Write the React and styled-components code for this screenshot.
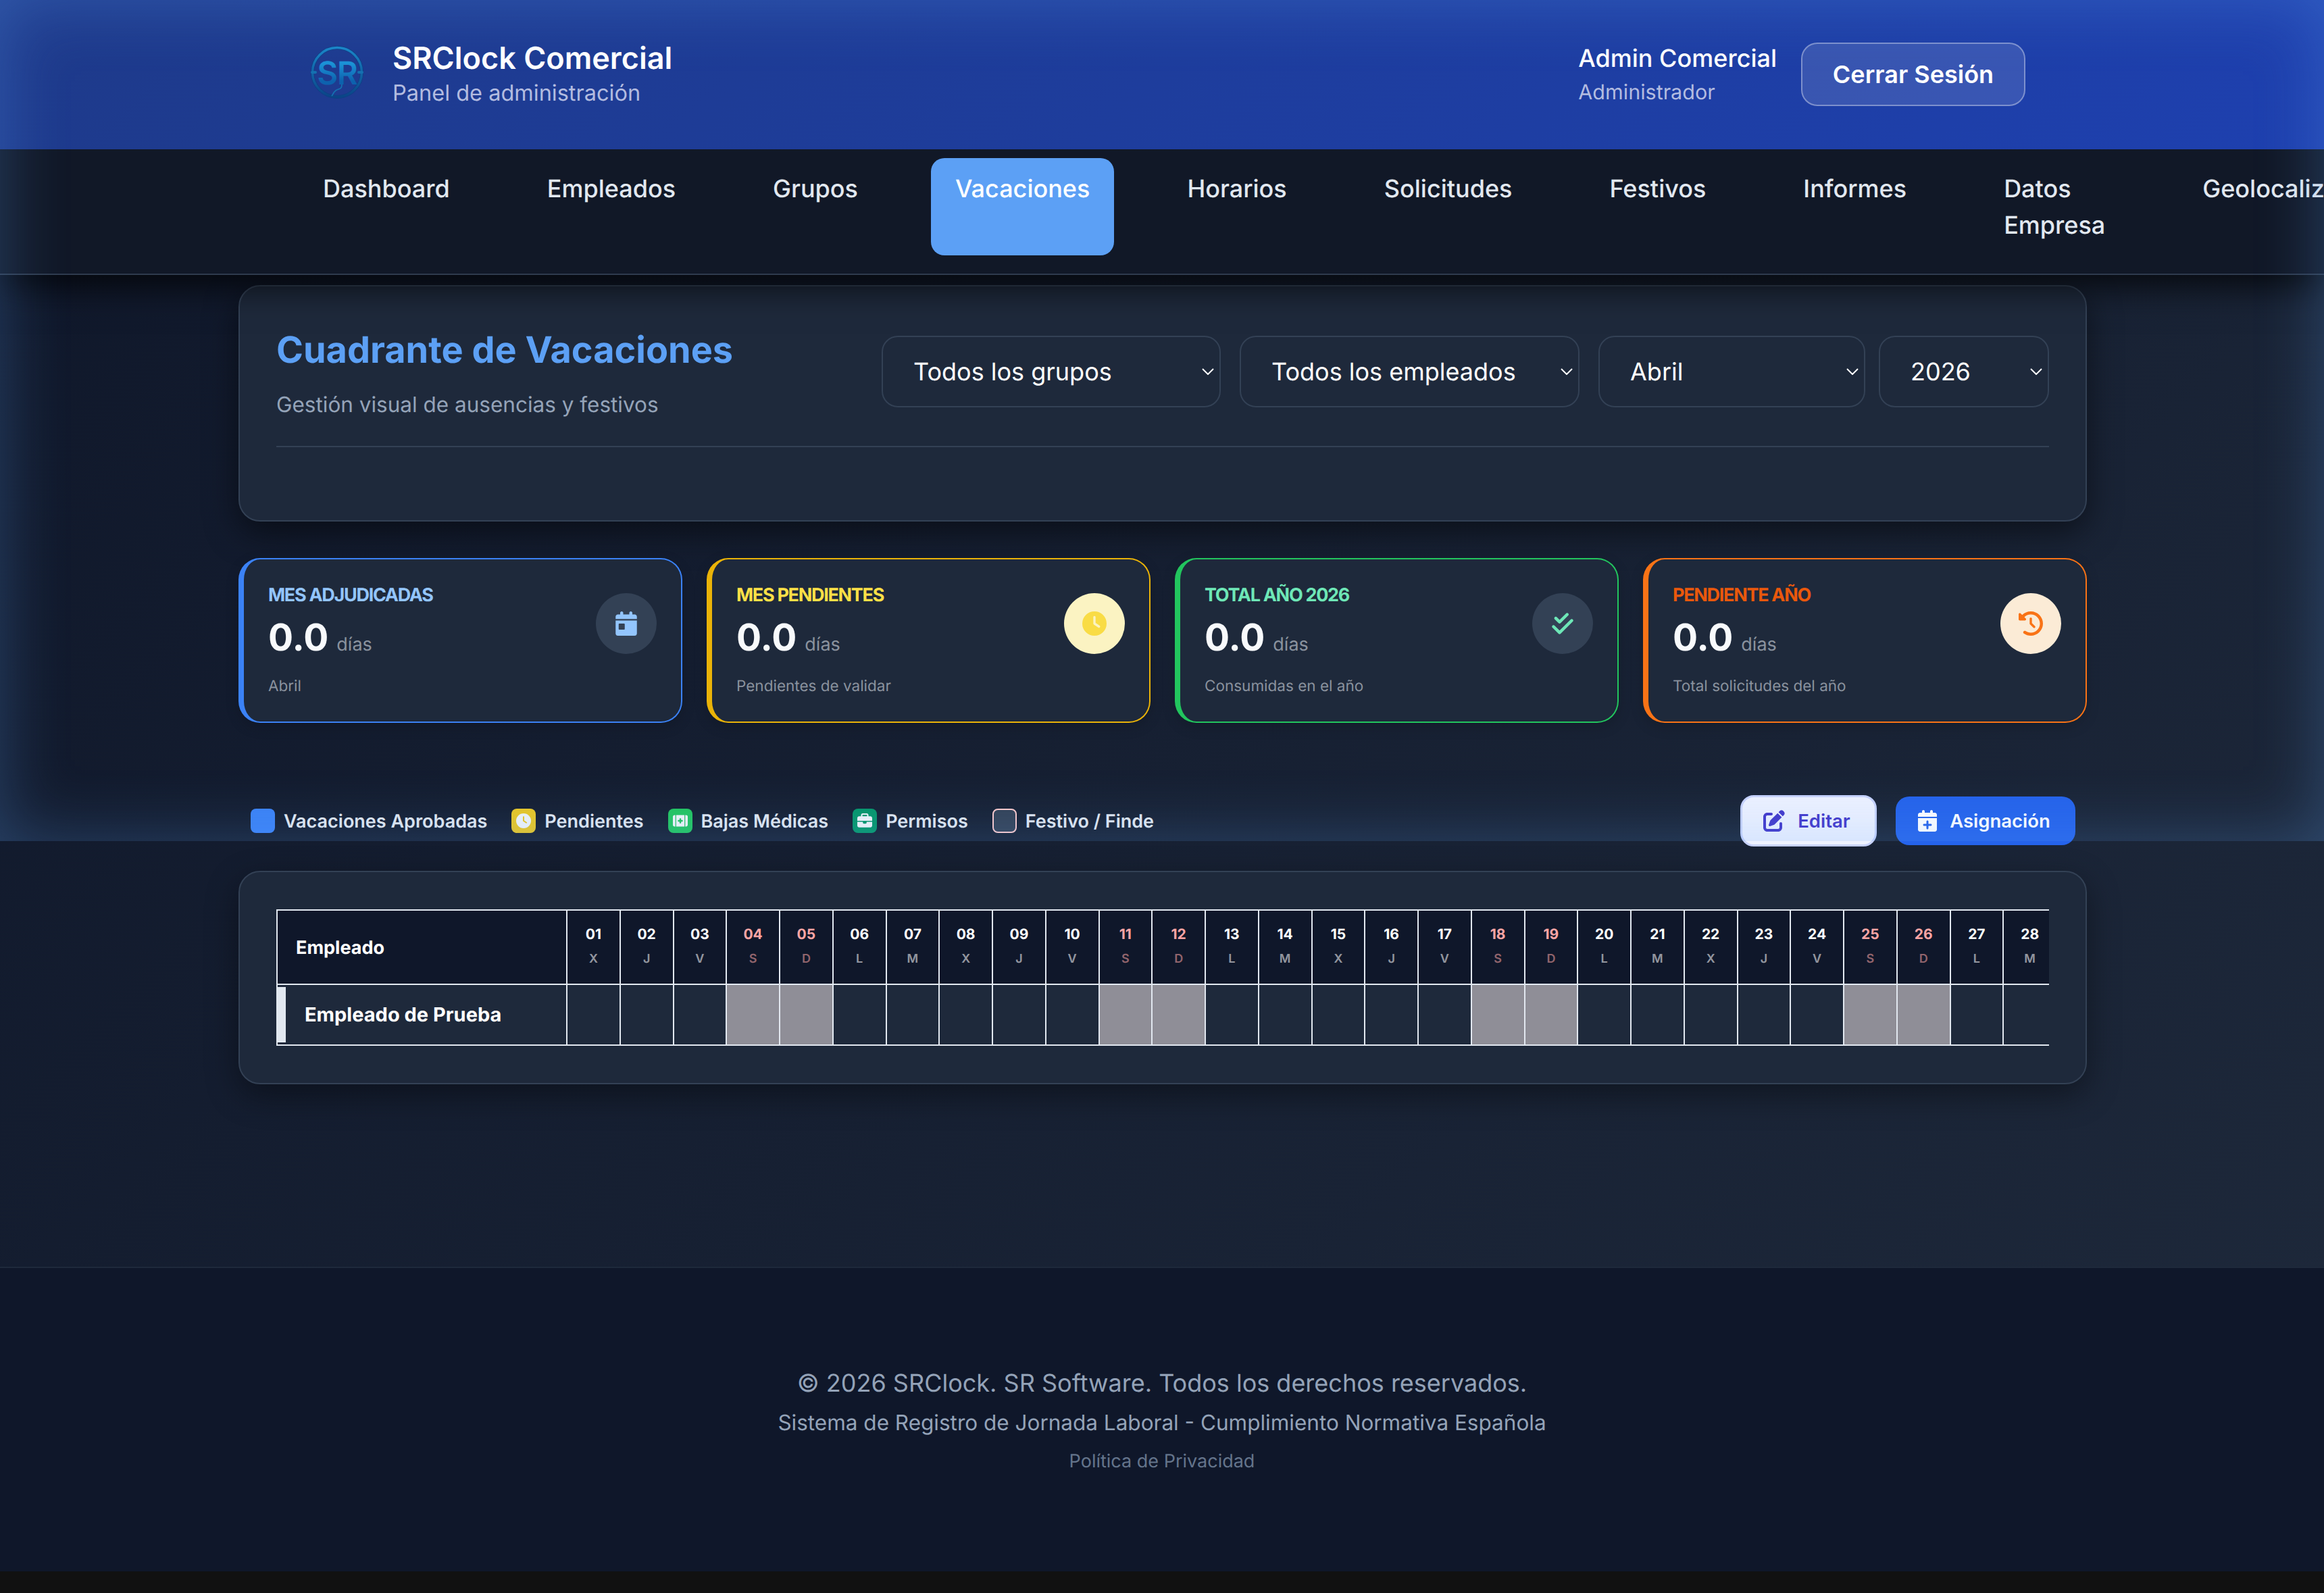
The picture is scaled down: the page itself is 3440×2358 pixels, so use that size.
import React from "react";
import styled, { createGlobalStyle } from "styled-components";
import {
  FaCalendarDay,
  FaClock,
  FaCheckDouble,
  FaClockRotateLeft,
  FaKitMedical,
  FaBriefcase,
  FaPenToSquare,
  FaCalendarPlus,
} from "react-icons/fa6";

const Global = createGlobalStyle`
  html, body { margin: 0; padding: 0; background: #111111; }
  body {
    font-family: Inter, "Noto Sans", "Liberation Sans", sans-serif;
    text-rendering: geometricPrecision;
    -webkit-font-smoothing: antialiased;
    overflow-x: hidden;
  }
  * { box-sizing: border-box; }
`;

const Page = styled.div`
  position: relative;
  width: 3440px;
  height: 2358px;
  overflow: hidden;
  background: #111111;
`;
const Shell = styled.div`
  height: 2326px;
  display: flex;
  flex-direction: column;
  background: linear-gradient(135deg, #0f172a 0%, #1e293b 100%);
`;
const EdgeGlow = styled.div`
  position: absolute;
  top: 0;
  left: 0;
  width: 100%;
  height: 1245px;
  pointer-events: none;
  z-index: 5;
  box-shadow: inset 0 0 100px rgba(96, 165, 250, 0.3);
`;

const Header = styled.header`
  height: 221px;
  flex-shrink: 0;
  background: linear-gradient(135deg, #1e3a8a 0%, #1e40af 100%);
  padding: 0 442px 2px 444px;
  display: flex;
  align-items: center;
  justify-content: space-between;
`;
const Brand = styled.div`
  display: flex;
  align-items: center;
  gap: 25px;
`;
const LogoBox = styled.svg`
  width: 112px;
  height: 112px;
  display: block;
`;
const BrandTitle = styled.div`
  font-size: 45px;
  font-weight: 600;
  line-height: 56px;
  color: #ffffff;
`;
const BrandSub = styled.div`
  font-size: 32.5px;
  line-height: 48px;
  color: #b3bce0;
`;
const UserArea = styled.div`
  display: flex;
  align-items: center;
  gap: 36px;
`;
const UserName = styled.div`
  font-size: 36px;
  font-weight: 500;
  line-height: 54px;
  color: #ffffff;
`;
const UserRole = styled.div`
  font-size: 30.5px;
  line-height: 48px;
  color: #b3bce0;
`;
const LogoutButton = styled.button`
  width: 332px;
  height: 94px;
  border: 2px solid rgba(255, 255, 255, 0.35);
  border-radius: 24px;
  background: rgba(255, 255, 255, 0.12);
  color: #ffffff;
  font: 600 36px Inter, sans-serif;
`;

const Nav = styled.nav`
  position: relative;
  z-index: 2;
  height: 186px;
  flex-shrink: 0;
  display: flex;
  align-items: flex-start;
  gap: 72px;
  padding: 13px 0 0 442px;
  background: #111827;
  border-bottom: 2px solid #2f3b4e;
  box-shadow: 0 16px 48px rgba(0, 0, 0, 0.75);
  clip-path: inset(0 0 -100px 0);
`;
const Tab = styled.a`
  flex-shrink: 0;
  height: 144px;
  padding: 18px 36px;
  border-radius: 20px;
  font-size: 36px;
  font-weight: 500;
  line-height: 54px;
  color: ${(p) => (p.$active ? "#ffffff" : "#e2e8f0")};
  background: ${(p) => (p.$active ? "#5ca0f5" : "transparent")};
  width: ${(p) => (p.$wrap ? "min-content" : "auto")};
`;

const Main = styled.main`
  flex: 1;
  padding: 15px 351px 0 353px;
`;
const FilterCard = styled.section`
  height: 350px;
  padding: 53px 54px;
  background: #1e293b;
  border: 2px solid #334155;
  border-radius: 32px;
  box-shadow: 0 16px 48px rgba(0, 0, 0, 0.5);
`;
const FilterHead = styled.div`
  display: flex;
  align-items: center;
  justify-content: space-between;
  padding-bottom: 37px;
  border-bottom: 2px solid #334155;
`;
const PageTitle = styled.h1`
  margin: 0;
  font-size: 54px;
  font-weight: 700;
  line-height: 84px;
  color: #5ca0f5;
`;
const PageSub = styled.p`
  margin: 14px 0 0;
  font-size: 31.5px;
  line-height: 48px;
  color: #94a3b8;
`;
const Filters = styled.div`
  display: flex;
  align-items: center;
  gap: 28px;
`;
const PeriodPair = styled.div`
  display: flex;
  gap: 20px;
`;
const SelectBox = styled.div`
  width: ${(p) => p.$w}px;
  height: 106px;
  padding: 0 8px 0 45px;
  display: flex;
  align-items: center;
  justify-content: space-between;
  border: 2px solid #334155;
  border-radius: 24px;
  background: #1e293b;
  color: #ffffff;
  font-size: 36px;
`;

const StatGrid = styled.div`
  display: grid;
  grid-template-columns: repeat(4, 1fr);
  gap: 36px;
  margin-top: 54px;
`;
const StatCard = styled.article`
  height: 244px;
  padding: 32px 36px 0 36px;
  background: #1e293b;
  border: 2px solid ${(p) => p.$color};
  border-left-width: 8px;
  border-radius: 32px;
  box-shadow: 0 6px 20px rgba(0, 0, 0, 0.15);
`;
const StatTop = styled.div`
  display: flex;
  align-items: center;
  justify-content: space-between;
`;
const StatLabel = styled.div`
  font-size: 27px;
  font-weight: 700;
  line-height: 42px;
  letter-spacing: -1.3px;
  text-transform: uppercase;
  color: ${(p) => p.$color};
`;
const StatValue = styled.div`
  font-size: 55px;
  font-weight: 700;
  line-height: 84px;
  color: #f8fafc;
`;
const StatUnit = styled.span`
  margin-left: 12px;
  font-size: 27px;
  font-weight: 400;
  line-height: 27px;
  color: #8a929e;
`;
const StatIcon = styled.div`
  width: 90px;
  height: 90px;
  border-radius: 50%;
  display: flex;
  align-items: center;
  justify-content: center;
  font-size: 36px;
  background: ${(p) => p.$bg};
  color: ${(p) => p.$color};
`;
const StatNote = styled.div`
  margin-top: 12px;
  font-size: 22.5px;
  line-height: 36px;
  color: #8a929e;
`;

const LegendRow = styled.div`
  height: 76px;
  margin: 107px 0 36px;
  padding: 0 17px 0 18px;
  display: flex;
  align-items: center;
  justify-content: space-between;
`;
const Legend = styled.div`
  display: flex;
  align-items: center;
  gap: 36px;
`;
const LegendItem = styled.div`
  display: flex;
  align-items: center;
  gap: 13px;
  font-size: 27px;
  font-weight: 600;
  color: #e2e8f0;
`;
const Swatch = styled.span`
  width: 36px;
  height: 36px;
  border-radius: 8px;
  display: flex;
  align-items: center;
  justify-content: center;
  font-size: 22px;
  color: #f1f5f9;
  background: ${(p) => p.$bg};
  border: ${(p) => (p.$border ? `2px solid ${p.$border}` : "none")};
`;
const Actions = styled.div`
  display: flex;
  align-items: center;
  gap: 28px;
`;
const EditButton = styled.button`
  width: 202px;
  height: 76px;
  padding: 0 5px 0 0;
  display: flex;
  align-items: center;
  justify-content: center;
  gap: 19px;
  border: 3px solid #c7d2fe;
  border-radius: 20px;
  background: #eef2ff;
  color: #4338ca;
  font: 600 27.5px Inter, sans-serif;
  svg { font-size: 32px; }
`;
const AssignButton = styled.button`
  width: 266px;
  height: 72px;
  padding: 0 6px 0 0;
  display: flex;
  align-items: center;
  justify-content: center;
  gap: 17px;
  border: none;
  border-radius: 20px;
  background: #2563eb;
  color: #ffffff;
  font: 600 27.5px Inter, sans-serif;
  svg { font-size: 32px; }
`;

const TableCard = styled.section`
  padding: 55px 54px 55px;
  background: #1e293b;
  border: 2px solid #334155;
  border-radius: 32px;
  box-shadow: 0 16px 48px rgba(0, 0, 0, 0.4);
`;
const TableScroll = styled.div`
  overflow: hidden;
`;
const Cuadrante = styled.table`
  width: 2636px;
  table-layout: fixed;
  border-collapse: collapse;
  color: #ffffff;
  th, td {
    padding: 0;
    border: 2px solid #e2e8f0;
  }
`;
const EmployeeHead = styled.th`
  width: 429px;
  height: 110px;
  padding-left: 27px !important;
  background: #0f172a;
  text-align: left;
  font-size: 27px;
  font-weight: 700;
`;
const DayHead = styled.th`
  height: 110px;
  background: #0f172a;
  text-align: center;
  color: ${(p) => (p.$weekend ? "#fca5a5" : "#ffffff")};
`;
const DayNum = styled.div`
  font-size: 21px;
  font-weight: 700;
  line-height: 30px;
`;
const DayLetter = styled.div`
  margin-top: 6px;
  font-size: 18px;
  font-weight: 600;
  line-height: 30px;
  opacity: 0.55;
`;
const NameCell = styled.td`
  height: 90px;
  background: #1e293b;
`;
const NameInner = styled.div`
  height: 82px;
  display: flex;
  align-items: center;
  padding: 0 0 2px 28px;
  border-left: 12px solid #e2e8f0;
  font-size: 29px;
  font-weight: 700;
`;
const DayCell = styled.td`
  background: ${(p) => (p.$weekend ? "#8f8e97" : "#1e293b")};
`;

const Footer = styled.footer`
  height: 451px;
  flex-shrink: 0;
  padding-top: 143px;
  background: #0f172a;
  border-top: 2px solid #1e293b;
  text-align: center;
`;
const Copy = styled.div`
  font-size: 36px;
  line-height: 54px;
  color: #94a3b8;
`;
const System = styled.div`
  margin-top: 8px;
  font-size: 31.5px;
  line-height: 48px;
  color: #94a3b8;
`;
const Privacy = styled.a`
  display: block;
  margin-top: 12px;
  font-size: 27px;
  line-height: 42px;
  color: #64748b;
`;

const Chevron = () => (
  <svg width="18" height="10" viewBox="0 0 18 10" fill="none">
    <path d="M1 1l8 8 8-8" stroke="#ffffff" strokeWidth="2" />
  </svg>
);

const Logo = () => (
  <LogoBox viewBox="0 0 112 112" aria-label="SR">
    <defs>
      <linearGradient id="ring" x1="0" y1="0" x2="0" y2="1">
        <stop offset="0" stopColor="#1a86c8" />
        <stop offset="1" stopColor="#0a4487" />
      </linearGradient>
      <linearGradient id="letters" x1="0" y1="0" x2="0" y2="1">
        <stop offset="0.25" stopColor="#1c92d6" />
        <stop offset="0.7" stopColor="#0d62ae" />
      </linearGradient>
    </defs>
    <circle cx="55" cy="53" r="36.5" fill="none" stroke="#0d3f83" strokeWidth="5" />
    <circle cx="55" cy="53" r="36.5" fill="none" stroke="url(#ring)" strokeWidth="3.5" />
    <text
      x="55"
      y="71"
      textAnchor="middle"
      fontFamily="Inter, sans-serif"
      fontSize="47"
      fontWeight="600"
      letterSpacing="-1"
      fill="url(#letters)"
    >
      SR
    </text>
    <path d="M18 53h5M92 53h-5" stroke="#1570b0" strokeWidth="4" strokeLinecap="round" />
    <path d="M62 71c0 8-5 6-9 9s-4 6-6 8" fill="none" stroke="#1570b0" strokeWidth="1.8" />
  </LogoBox>
);

const tabs = ["Dashboard", "Empleados", "Grupos", "Vacaciones", "Horarios", "Solicitudes", "Festivos", "Informes", "Datos Empresa", "Geolocalización"];

const letters = ["X", "J", "V", "S", "D", "L", "M"];
const days = Array.from({ length: 28 }, (_, i) => ({
  num: String(i + 1).padStart(2, "0"),
  letter: letters[i % 7],
  weekend: i % 7 === 3 || i % 7 === 4,
}));

const stats = [
  { color: "#3b82f6", label: "Mes adjudicadas", labelColor: "#93c5fd", note: "Abril", iconBg: "#334155", iconColor: "#93c5fd", Icon: FaCalendarDay },
  { color: "#eab308", label: "Mes pendientes", labelColor: "#fde047", note: "Pendientes de validar", iconBg: "#fbf3c2", iconColor: "#f9dc45", Icon: FaClock },
  { color: "#22c55e", label: "Total año 2026", labelColor: "#6ee7b7", note: "Consumidas en el año", iconBg: "#334155", iconColor: "#6ee7b7", Icon: FaCheckDouble },
  { color: "#f97316", label: "Pendiente año", labelColor: "#ea580c", note: "Total solicitudes del año", iconBg: "#fbebd6", iconColor: "#f97316", Icon: FaClockRotateLeft },
];

const legend = [
  { text: "Vacaciones Aprobadas", bg: "#3b82f6" },
  { text: "Pendientes", bg: "#eac723", Icon: FaClock },
  { text: "Bajas Médicas", bg: "#22c55e", Icon: FaKitMedical },
  { text: "Permisos", bg: "#059669", Icon: FaBriefcase },
  { text: "Festivo / Finde", bg: "#334155", border: "#fecaca" },
];

const selects = [
  { w: 502, text: "Todos los grupos" },
  { w: 503, text: "Todos los empleados" },
];

export default function App() {
  return (
    <Page>
      <Global />
      <Shell>
        <Header>
          <Brand>
            <Logo />
            <div>
              <BrandTitle>SRClock Comercial</BrandTitle>
              <BrandSub>Panel de administración</BrandSub>
            </div>
          </Brand>
          <UserArea>
            <div>
              <UserName>Admin Comercial</UserName>
              <UserRole>Administrador</UserRole>
            </div>
            <LogoutButton>Cerrar Sesión</LogoutButton>
          </UserArea>
        </Header>
        <Nav>
          {tabs.map((t) => (
            <Tab key={t} $active={t === "Vacaciones"} $wrap={t === "Datos Empresa"}>
              {t}
            </Tab>
          ))}
        </Nav>
        <Main>
          <FilterCard>
            <FilterHead>
              <div>
                <PageTitle>Cuadrante de Vacaciones</PageTitle>
                <PageSub>Gestión visual de ausencias y festivos</PageSub>
              </div>
              <Filters>
                {selects.map((s) => (
                  <SelectBox key={s.text} $w={s.w}>
                    {s.text}
                    <Chevron />
                  </SelectBox>
                ))}
                <PeriodPair>
                  <SelectBox $w={395}>
                    Abril
                    <Chevron />
                  </SelectBox>
                  <SelectBox $w={252}>
                    2026
                    <Chevron />
                  </SelectBox>
                </PeriodPair>
              </Filters>
            </FilterHead>
          </FilterCard>

          <StatGrid>
            {stats.map(({ color, label, labelColor, note, iconBg, iconColor, Icon }) => (
              <StatCard key={label} $color={color}>
                <StatTop>
                  <div>
                    <StatLabel $color={labelColor}>{label}</StatLabel>
                    <StatValue>
                      0.0<StatUnit>días</StatUnit>
                    </StatValue>
                  </div>
                  <StatIcon $bg={iconBg} $color={iconColor}>
                    <Icon />
                  </StatIcon>
                </StatTop>
                <StatNote>{note}</StatNote>
              </StatCard>
            ))}
          </StatGrid>

          <LegendRow>
            <Legend>
              {legend.map(({ text, bg, border, Icon }) => (
                <LegendItem key={text}>
                  <Swatch $bg={bg} $border={border}>
                    {Icon && <Icon />}
                  </Swatch>
                  {text}
                </LegendItem>
              ))}
            </Legend>
            <Actions>
              <EditButton>
                <FaPenToSquare />
                Editar
              </EditButton>
              <AssignButton>
                <FaCalendarPlus />
                Asignación
              </AssignButton>
            </Actions>
          </LegendRow>

          <TableCard>
            <TableScroll>
              <Cuadrante>
                <thead>
                  <tr>
                    <EmployeeHead>Empleado</EmployeeHead>
                    {days.map((d) => (
                      <DayHead key={d.num} $weekend={d.weekend}>
                        <DayNum>{d.num}</DayNum>
                        <DayLetter>{d.letter}</DayLetter>
                      </DayHead>
                    ))}
                  </tr>
                </thead>
                <tbody>
                  <tr>
                    <NameCell>
                      <NameInner>Empleado de Prueba</NameInner>
                    </NameCell>
                    {days.map((d) => (
                      <DayCell key={d.num} $weekend={d.weekend} />
                    ))}
                  </tr>
                </tbody>
              </Cuadrante>
            </TableScroll>
          </TableCard>
        </Main>
        <Footer>
          <Copy>© 2026 SRClock. SR Software. Todos los derechos reservados.</Copy>
          <System>Sistema de Registro de Jornada Laboral - Cumplimiento Normativa Española</System>
          <Privacy>Política de Privacidad</Privacy>
        </Footer>
      </Shell>
      <EdgeGlow />
    </Page>
  );
}
